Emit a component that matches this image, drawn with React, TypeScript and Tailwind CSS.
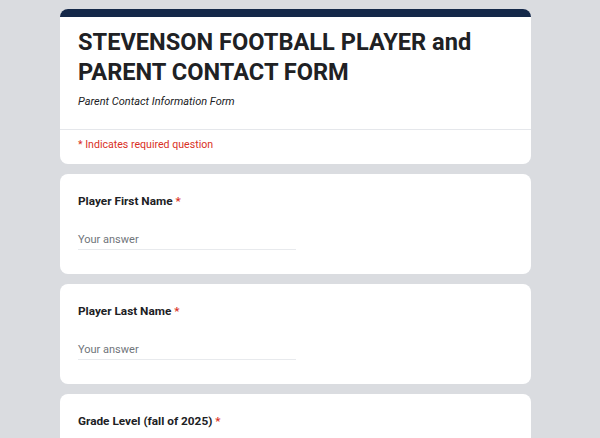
import React from 'react';

function Question({ label }: { label: string }) {
  return (
    <div className="bg-white rounded-lg px-[18px] pt-[17px] h-[100px] shrink-0">
      <div className="text-[11.8px] font-bold text-[#202124] leading-[20px]">
        {label} <span className="text-[#d93025] font-medium">*</span>
      </div>
      <div className="mt-[21px] w-[218px] border-b border-[#e8eaed] pb-[1px] text-[11px] text-[#70757a] leading-[16px]">
        Your answer
      </div>
    </div>
  );
}

export default function App() {
  return (
    <div
      className="h-[438px] overflow-hidden bg-[#dadce0] pt-[9px] pl-[60px]"
      style={{ fontFamily: 'Roboto, "Liberation Sans", sans-serif' }}
    >
      <div className="w-[471px] flex flex-col gap-[10px]">
        <div className="bg-white rounded-lg overflow-hidden shrink-0">
          <div className="h-[8px] bg-[#142849]" />
          <div className="px-[18px] pt-[10px] pb-[19px]">
            <h1 className="text-[23.6px] font-bold text-[#202124] leading-[30px]">
              STEVENSON FOOTBALL PLAYER and PARENT CONTACT FORM
            </h1>
            <p className="mt-[7px] text-[11px] italic text-[#202124] leading-[16px]">
              Parent Contact Information Form
            </p>
          </div>
          <div className="border-t border-[#e5e7eb] px-[18px] pt-[7px] pb-[11px] text-[10.6px] text-[#d93025] leading-[16px]">
            * Indicates required question
          </div>
        </div>
        <Question label="Player First Name" />
        <Question label="Player Last Name" />
        <Question label="Grade Level (fall of 2025)" />
      </div>
    </div>
  );
}
